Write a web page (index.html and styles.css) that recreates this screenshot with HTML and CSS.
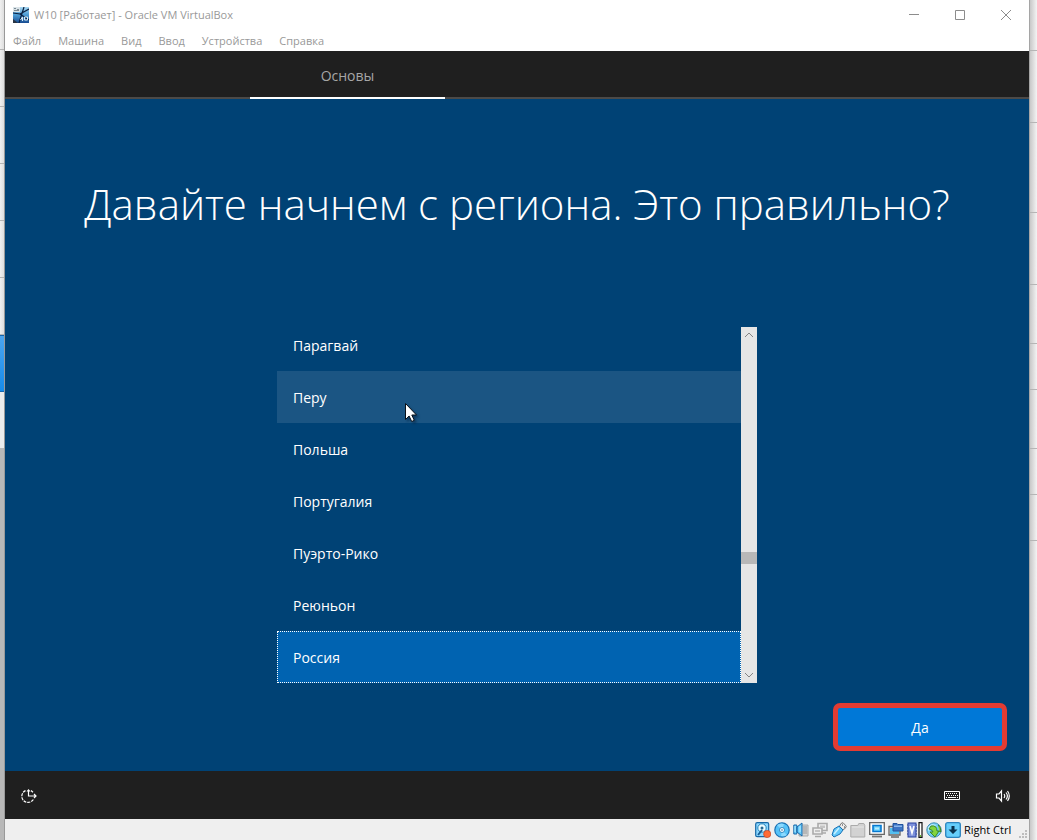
FILE: index.html
```html
<!DOCTYPE html>
<html lang="ru">
<head>
<meta charset="utf-8">
<title>W10 [Работает] - Oracle VM VirtualBox</title>
<link rel="stylesheet" href="styles.css">
</head>
<body>
<div class="desktop">
  <div class="backdrop backdrop-left" aria-hidden="true">
    <i class="row-first"></i><i></i><i></i><i></i><i></i><i></i><i class="row-active"></i><i class="row-last"></i>
  </div>
  <div class="window">
    <header class="titlebar">
      <svg class="app-icon" viewBox="0 0 16 16" aria-hidden="true">
        <defs><linearGradient id="app" x1="0" y1="0" x2="0" y2="1"><stop offset="0" stop-color="#a9d8f2"/><stop offset=".5" stop-color="#4b9bd3"/><stop offset="1" stop-color="#174b91"/></linearGradient></defs>
        <path fill="url(#app)" d="M0 0h16v16H0z"/>
        <path fill="#d9e3e8" d="M0 0h7v5H0z"/><path fill="#7b8992" d="M1 1h2v1H1zM4 2h2v1H4zM1 3h5v1H1z"/>
        <path d="M11 0 6 16M0 6l7 1 9 6M7 7l9-5" fill="none" stroke="#0b2040" stroke-width="1.200"/>
        <path d="M0 12l5 4H0z" fill="#293444"/>
        <path d="M7.500 13l2-3v4m2-4h3v3h-3z" fill="none" stroke="#dceaf2"/>
      </svg>
      <h1 class="window-title">W10 [Работает] - Oracle VM VirtualBox</h1>
      <div class="window-controls">
        <button aria-label="Свернуть"><svg viewBox="0 0 12 12"><path d="M1 5.500h10"/></svg></button>
        <button aria-label="Развернуть"><svg viewBox="0 0 12 12"><path d="M1.500 1.500h9v9h-9z"/></svg></button>
        <button aria-label="Закрыть"><svg viewBox="0 0 12 12"><path d="M1 1l10 10M11 1 1 11"/></svg></button>
      </div>
    </header>
    <nav class="menubar">
      <button>Файл</button><button>Машина</button><button>Вид</button><button>Ввод</button><button>Устройства</button><button>Справка</button>
    </nav>
    <nav class="steps"><button class="step" aria-current="step">Основы</button></nav>
    <main class="setup">
      <h2 class="question">Давайте начнем с региона. Это правильно?</h2>
      <div class="region-list">
        <ul class="regions" role="listbox" aria-label="Регион">
          <li role="option">Парагвай</li>
          <li role="option" class="hovered">Перу
            <svg class="pointer" viewBox="0 0 12 19" aria-hidden="true"><path d="M.5.5v16l3.600-3.500 2.600 5.500 2.600-1.200-2.500-5.300h4.700z" fill="#fff" stroke="#081018"/></svg>
          </li>
          <li role="option">Польша</li>
          <li role="option">Португалия</li>
          <li role="option">Пуэрто-Рико</li>
          <li role="option">Реюньон</li>
          <li role="option" class="selected" aria-selected="true">Россия</li>
        </ul>
        <div class="scrollbar">
          <button aria-label="Вверх"><svg viewBox="0 0 10 6"><path d="M1 5l4-4 4 4"/></svg></button>
          <div class="track"><div class="thumb"></div></div>
          <button aria-label="Вниз"><svg viewBox="0 0 10 6"><path d="M1 1l4 4 4-4"/></svg></button>
        </div>
      </div>
      <div class="actions"><button class="confirm">Да</button></div>
    </main>
    <footer class="guest-bar">
      <button class="access" aria-label="Специальные возможности"><svg width="18" height="18" viewBox="0 0 18 18"><path d="M8.500 3v6H16M14 7l2 2-2 2" fill="none" stroke="#fff" stroke-width="1.200"/><path d="M6.500 4.500l2-2.500 2 2.500z" fill="#fff"/><path d="M5.500 3.600A6.200 6.200 0 1 0 13.800 11.500M11 3.500l2 1.700" fill="none" stroke="#fff" stroke-width="1.200" stroke-dasharray="3 1"/></svg></button>
      <button class="keyboard" aria-label="Клавиатура"><svg width="16" height="10" viewBox="0 0 16 10"><path d="M.5.5h15v8H.5z" fill="none" stroke="#fff"/><path d="M2 2.500h12M3 4.500h11" stroke="#fff" stroke-dasharray="1 1"/><path d="M2 6.500h1M4 6.500h8M13 6.500h1" stroke="#fff"/></svg></button>
      <button class="sound" aria-label="Звук"><svg width="16" height="14" viewBox="0 0 16 14"><path d="M1.500 5v4H4l2.500 3V2L4 5zM9 5q1.500 2 0 4M11 3.500q2.800 3.500 0 7M12.500 2q3.600 5 0 10" fill="none" stroke="#fff" stroke-width="1.200"/></svg></button>
    </footer>
    <footer class="statusbar">
      <svg viewBox="0 0 16 16"><rect x=".7" y=".7" width="13" height="14" rx="1.500" fill="#8bd6ff" stroke="#1768a6" stroke-width="1.200"/><circle cx="7" cy="6" r="4.200" fill="#e9faff" stroke="#2484ba"/><circle cx="7" cy="6" r="1.500" fill="#236793"/><path d="M3 13l4-5" stroke="#185e95" stroke-width="2"/><circle cx="12.200" cy="12" r="3.600" fill="#ff6b35" stroke="#c74521" stroke-width=".7"/></svg>
      <svg viewBox="0 0 16 16"><circle cx="8" cy="8" r="7.200" fill="#55c2f8" stroke="#1971b4" stroke-width="1.200"/><path d="M8 8 3 3a7 7 0 0 1 7-1zM8 8l5 5a7 7 0 0 1-6 1z" fill="#8ad9ff"/><circle cx="8" cy="8" r="2.500" fill="#fff" stroke="#328bc2"/><circle cx="8" cy="8" r=".8" fill="#266a9b"/></svg>
      <svg viewBox="0 0 16 16"><path d="M8 3h7v11H6v-3h2z" fill="#d5d5d5" stroke="#aaa"/><path d="M10 5h4M10 7h4M10 9h4M10 11h4" stroke="#999"/><path d="M.8 3h3v9h-3zM4 5l5-4v13l-5-4z" fill="#68cefe" stroke="#1767a8"/><path d="M2 4v6M7 4v6" stroke="#b8edff"/></svg>
      <svg viewBox="0 0 16 16"><path d="M6 1.500h9v7H6zM8 11h6" fill="#eee" stroke="#aaa" stroke-width="1.600"/><path d="M1 6h9v6H1zM3 14.500h6" fill="#eee" stroke="#aaa" stroke-width="1.600"/><path d="M3 8h5v2H3zM8 3.500h5V6H8z" fill="#c4c4c4"/></svg>
      <svg viewBox="0 0 16 16"><path d="M10 1.500 12 .7l3.300 3.500-1 2.100-2.500 1.500-3.300-3.500z" fill="#eee" stroke="#777"/><path d="M8 4 12 8l-3 4-6 3-2-2 2-6z" fill="#64c9fb" stroke="#1971b4"/><path d="M8 6l-5 6" stroke="#c5f0ff" stroke-width="1.500"/><path d="M11 3h1M13 5h1" stroke="#333"/></svg>
      <svg viewBox="0 0 16 16"><path d="M.8 15V3.500h7l1-2h5l1 2V15z" fill="#d2d2d2" stroke="#aaa"/><path d="M2 5h12" stroke="#e5e5e5"/></svg>
      <svg viewBox="0 0 16 16"><path d="M.7.7h14.600v11.600H.7z" fill="#fff" stroke="#666" stroke-width="1.300"/><path d="M4 3.500h8v6H4z" fill="#65cefb" stroke="#0778d0" stroke-width="1.600"/><path d="M6 5.500h4v2H6z" fill="#b5ecff"/><path d="M3 14.500h10" stroke="#777" stroke-width="1.800"/></svg>
      <svg viewBox="0 0 16 16"><path d="M1 4.500h11V13H1zM3 15h8" fill="#eee" stroke="#666" stroke-width="1.300"/><path d="M2 6h9v6H2z" fill="#54bff0"/><path d="M5 1.500h4l1 1h5V9H5z" fill="#3d74c4" stroke="#21539c"/><path d="M6 3.500h8V5H6z" fill="#8bb7ec"/></svg>
      <svg viewBox="0 0 16 16"><path d="M0 3h10M0 6h10M0 9h10M0 12h10" stroke="#1e338d"/><rect x="1" y="1" width="8" height="14" fill="#7d91dc" stroke="#2b429f"/><path d="M3 4l2 7 2-7" fill="none" stroke="#fff" stroke-width="1.600"/><path d="M12 .6h3v14.800h-3z" fill="#fff" stroke="#111" stroke-width="1.200"/><path d="M13 13h1v2h-1z" fill="#65b832"/></svg>
      <svg viewBox="0 0 16 16"><circle cx="8" cy="8" r="7.200" fill="#75cef5" stroke="#438db3"/><path d="M2 5l4-3 4 1-4 4-4 2z" fill="#c0edff"/><path d="M5 4q6-1 6 5h2l-4 6-5-5h3q0-2-4-3zM12 3q3 2 3 7l-2-1" fill="#83d43c" stroke="#38862a"/></svg>
      <svg viewBox="0 0 16 16"><rect x=".7" y=".7" width="14.600" height="14.600" rx="2" fill="#65cefb" stroke="#2a83be" stroke-width="1.300"/><path d="M6.500 4h3v3.500h3L8 12 3.500 7.500h3z" fill="#09334f"/></svg>
      <span class="host-key">Right Ctrl</span>
      <svg class="grip" viewBox="0 0 10 10"><path d="M7 0h2v2H7zM4 3h2v2H4zM7 3h2v2H7zM1 6h2v2H1zM4 6h2v2H4zM7 6h2v2H7z" fill="#bdbdbd"/></svg>
    </footer>
  </div>
  <div class="backdrop backdrop-right" aria-hidden="true">
    <i class="h51"></i><i class="h72"></i><i class="h90"></i><i class="h72"></i><i class="h59"></i><i class="h46"></i><i class="h59"></i><i class="h46"></i><i class="h46"></i>
  </div>
</div>
</body>
</html>
```
FILE: styles.css
```css
* { box-sizing: border-box; }
body { margin: 0; font-family: "Open Sans", "Noto Sans", sans-serif; }
button { border: 0; padding: 0; background: none; color: inherit; font: inherit; }
svg { display: block; }
.desktop { display: grid; grid-template-columns: 5px minmax(0, 1fr) 8px; min-height: 100vh; }
.backdrop { display: flex; flex-direction: column; }
.backdrop i { flex: none; height: 57px; border-bottom: 1px solid #b5b5b5; }
.backdrop-left { background: linear-gradient(90deg, #f0f0f0, #dedede); border-right: 1px solid #999; }
.backdrop-left .row-first { height: 50px; }
.backdrop-left .row-active { background: linear-gradient(#4ca5ef, #168bea); border-top: 1px solid #1767ad; border-bottom-color: #1767ad; }
.backdrop-left .row-last { flex: 1; border: 0; background: linear-gradient(#ececec 56px, #b8b8b8 56px); }
.backdrop-right { background: linear-gradient(90deg, #c8c8c8, #f4f4f4); border-left: 1px solid #a5a5a5; }
.backdrop-right .h51 { height: 51px; }
.backdrop-right .h72 { height: 72px; }
.backdrop-right .h90 { height: 90px; }
.backdrop-right .h59 { height: 59px; }
.backdrop-right .h46 { height: 46px; }

.window { display: flex; flex-direction: column; background: #fff; }
.titlebar { display: flex; align-items: center; height: 29px; padding-left: 8px; }
.app-icon { width: 16px; height: 16px; }
.window-title { margin: 0 0 0 5px; color: #999; font-size: 11px; font-weight: 400; line-height: 16px; }
.window-controls { display: flex; margin-left: auto; }
.window-controls button { display: grid; place-items: center; width: 46px; height: 29px; }
.window-controls svg { width: 12px; height: 12px; fill: none; stroke: #8c8c8c; }
.menubar { display: flex; align-items: center; gap: 17px; height: 22px; padding: 2px 0 0 8px; color: #999; font-size: 11px; line-height: 16px; }
.steps { height: 48px; padding-left: 245px; background: #1f1f1f; border-bottom: 2px solid #4c4a48; }
.step { width: 195px; height: 48px; padding-top: 2px; border-bottom: 2px solid #fff; color: #a6a6a6; font-size: 14px; }

.setup { display: flex; flex: 1; flex-direction: column; background: #004275; color: #fff; }
.question { margin: 72px 0 90px; font-size: 42px; font-weight: 300; line-height: 66px; text-align: center; }
.region-list { display: flex; align-self: center; width: 480px; max-width: 100%; height: 356px; }
.regions { display: flex; flex: 1; flex-direction: column; justify-content: flex-end; margin: 0; padding: 0; overflow: hidden; list-style: none; font-size: 14px; }
.regions li { position: relative; flex: none; height: 52px; padding: 0 16px; line-height: 54px; }
.regions .hovered { background: #1b5583; }
.regions .selected { border: 1px dotted #fff; padding: 0 15px; background: #0063b1; line-height: 52px; }
.pointer { position: absolute; left: 128px; top: 32px; width: 12px; height: 19px; filter: drop-shadow(2px 2px 1px #00204080); }
.scrollbar { display: flex; flex-direction: column; width: 16px; background: #e6e6e6; }
.scrollbar button { display: grid; place-items: center; height: 16px; }
.scrollbar svg { width: 10px; height: 6px; fill: none; stroke: #858585; }
.track { display: flex; flex: 1; flex-direction: column; padding-bottom: 103px; justify-content: flex-end; }
.thumb { height: 12px; background: #b8b8b8; }
.actions { display: flex; justify-content: flex-end; padding: 20px 22px; }
.confirm { width: 174px; height: 48px; border: 5px solid #e33b32; border-radius: 7px; background: #0078d7; font-size: 14px; }

.guest-bar { display: flex; align-items: center; height: 48px; padding: 2px 18px 0 15px; background: #1f1f1f; }
.keyboard { margin-left: auto; }
.sound { margin-left: 35px; }
.statusbar { display: flex; align-items: center; justify-content: flex-end; gap: 3px; height: 21px; padding-right: 1px; background: #efefef; }
.statusbar svg { flex: none; width: 16px; height: 16px; }
.host-key { width: 47px; color: #000; font-size: 11px; line-height: 16px; white-space: nowrap; }
.statusbar .grip { align-self: flex-end; width: 10px; height: 10px; margin-left: 4px; }
```
